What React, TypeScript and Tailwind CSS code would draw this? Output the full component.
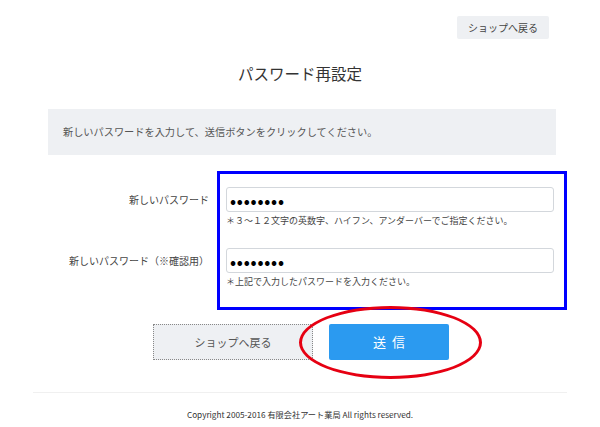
import React from "react";

const font = { fontFamily: '"Noto Sans CJK JP", "Noto Sans", sans-serif' };

function Field({ label, hint }: { label: string; hint: string }) {
  return (
    <div>
      <div className="flex items-center">
        <label className="w-[209px] text-right text-[10px] text-[#444]">{label}</label>
        <input
          type="password"
          readOnly
          defaultValue="abcdefgh"
          className="ml-[17px] w-[328px] h-[25px] rounded-[3px] border border-[#d3d7dc] px-[3px] text-[16px] font-bold tracking-[0.8px] text-black outline-none"
        />
      </div>
      <p className="ml-[226px] mt-[2px] text-[9px] leading-[14px] text-[#444]">{hint}</p>
    </div>
  );
}

export default function App() {
  return (
    <div className="relative w-[600px] h-[427px] bg-white overflow-hidden" style={font}>
      <div className="flex justify-end pt-[16px] pr-[51px]">
        <button className="w-[92px] h-[23px] bg-[#eef0f3] text-[10px] text-[#444] rounded-[2px]">
          ショップへ戻る
        </button>
      </div>

      <h1 className="mt-[22px] text-center text-[15.5px] leading-[24px] text-[#333]">パスワード再設定</h1>

      <div className="mt-[24px] ml-[48px] w-[508px] h-[46px] bg-[#eef0f3] flex items-center pl-[15px] text-[10.2px] text-[#555]">
        新しいパスワードを入力して、送信ボタンをクリックしてください。
      </div>

      <div className="mt-[32px]">
        <Field label="新しいパスワード" hint="＊３～１２文字の英数字、ハイフン、アンダーバーでご指定ください。" />
        <div className="mt-[20px]">
          <Field label="新しいパスワード（※確認用）" hint="＊上記で入力したパスワードを入力ください。" />
        </div>
      </div>

      <div className="mt-[35px] flex justify-center gap-[16px] pl-[2px]">
        <button className="w-[160px] h-[36px] border border-dotted border-[#888] bg-[#eef0f3] text-[11px] text-[#555]">
          ショップへ戻る
        </button>
        <button className="w-[120px] h-[36px] rounded-[2px] bg-[#2b9af0] text-[13px] text-white tracking-[6px] pl-[6px]">
          送信
        </button>
      </div>

      <div className="mt-[32px] mx-[33px] border-t border-[#f0f0f0] pt-[15px] text-center text-[8.2px] leading-[12px] text-[#333]">
        Copyright 2005-2016 有限会社アート業局 All rights reserved.
      </div>

      <div className="absolute left-[217px] top-[171px] w-[350px] h-[139px] border-[3px] border-[#0000ff]" />
      <div className="absolute left-[299px] top-[306px] w-[183px] h-[73px] rounded-[50%] border-[3px] border-[#e60012]" />
    </div>
  );
}
